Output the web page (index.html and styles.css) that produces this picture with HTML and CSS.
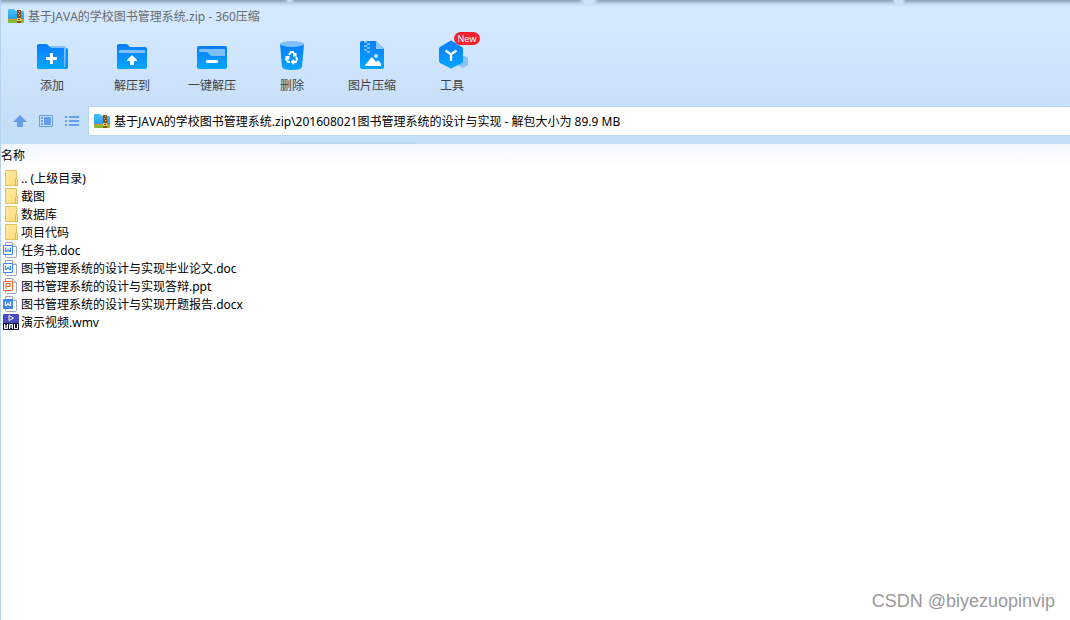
FILE: index.html
```html
<!DOCTYPE html>
<html lang="zh-CN">
<head>
<meta charset="utf-8">
<meta name="viewport" content="width=device-width, initial-scale=1">
<title>基于JAVA的学校图书管理系统.zip - 360压缩</title>
<link rel="stylesheet" href="styles.css">
</head>
<body>
<svg class="defs" aria-hidden="true">
  <defs>
    <linearGradient id="blue" x1="0" y1="0" x2="0" y2="1"><stop offset="0" stop-color="#087dff"/><stop offset="1" stop-color="#04a6ff"/></linearGradient>
    <linearGradient id="sky" x1="0" y1="0" x2="0" y2="1"><stop offset="0" stop-color="#4bc0f8"/><stop offset="1" stop-color="#239be6"/></linearGradient>
    <linearGradient id="gold" x1="0" y1="0" x2="1" y2="1"><stop offset="0" stop-color="#ffeaa6"/><stop offset="1" stop-color="#ffdc79"/></linearGradient>
    <symbol id="zip" viewBox="0 0 16 14">
      <path d="M0 1q0-1 1-1h5l2 2h7q1 0 1 1v8H0z" fill="url(#sky)"/>
      <path d="M0 10h16v1H0z" fill="#ff8a1f"/><path d="M0 11h16v2q0 1-1 1H1q-1 0-1-1z" fill="#7fbd3a"/>
      <path d="M9 1h4v13H9z" fill="#8b4a16"/><path d="M11 2h1v1h-1zM10 4h1v1h-1zM11 6h1v1h-1z" fill="#e9c27a"/>
      <path d="M9 9h4v3H9z" fill="#ffd04b"/><path d="M10 10h2v1h-2z" fill="#70401b"/>
    </symbol>
    <symbol id="folder" viewBox="0 0 16 18">
      <path d="M2.500 1.500h11v8l1 1v6h-12z" fill="url(#gold)" stroke="#e6c25d"/>
      <path d="M12.500 16.500v-6q0-1 1-1t1 1v6z" fill="#ffe28a" stroke="#dfb94e"/>
    </symbol>
    <symbol id="doc" viewBox="0 0 16 18">
      <path d="M2.500 1.500h7l4 4v10q0 1-1 1h-9q-1 0-1-1z" fill="#fff" stroke="#a3a8b0"/>
      <path d="M9.500 1.500v4h4" fill="#eef0f3" stroke="#a3a8b0"/>
      <rect y="4" width="10" height="10" rx="1" fill="#3d87f5"/><path d="M1 5h8v8H1z" fill="#fff"/>
      <path d="M2.500 6.500v4h1l1.500-2 1.500 2h1v-4" fill="none" stroke="#3d87f5" stroke-width="1.200"/>
    </symbol>
    <symbol id="docx" viewBox="0 0 16 18">
      <path d="M2.500 1.500h7l4 4v10q0 1-1 1h-9q-1 0-1-1z" fill="#fff" stroke="#a3a8b0"/>
      <path d="M9.500 1.500v4h4" fill="#eef0f3" stroke="#a3a8b0"/>
      <rect y="4" width="10" height="10" rx="1" fill="#3d87f5"/>
      <path d="M2.500 6.500v4h1l1.500-2 1.500 2h1v-4" fill="none" stroke="#fff" stroke-width="1.200"/>
    </symbol>
    <symbol id="ppt" viewBox="0 0 16 18">
      <path d="M2.500 1.500h7l4 4v10q0 1-1 1h-9q-1 0-1-1z" fill="#fff" stroke="#a3a8b0"/>
      <path d="M9.500 1.500v4h4" fill="#eef0f3" stroke="#a3a8b0"/>
      <rect y="4" width="10" height="10" rx="1" fill="#f26b35"/><path d="M1 5h8v8H1z" fill="#fff"/>
      <path d="M3 12V6.500h4v3H3" fill="none" stroke="#f26b35" stroke-width="1.200"/>
    </symbol>
    <symbol id="wmv" viewBox="0 0 16 18">
      <rect y="1" width="16" height="16" rx="1" fill="#4a4bc0"/><path d="M0 10h16v6q0 1-1 1H1q-1 0-1-1z" fill="#15163a"/>
      <path d="M6 2.500v5L10.500 5z" fill="none" stroke="#fff"/>
      <path d="M1.500 11v4.500h3V11M3 12v3M6.500 16v-4.500h3V16M8 12v3M11.500 11v4.500h3V11" fill="none" stroke="#fff"/>
    </symbol>
  </defs>
</svg>

<main class="window">
  <header class="chrome">
    <div class="titlebar">
      <svg class="zip-icon" aria-hidden="true"><use href="#zip"/></svg>
      <h1 class="title">基于JAVA的学校图书管理系统.zip - 360压缩</h1>
    </div>

    <nav class="toolbar" aria-label="工具栏">
      <button class="tool" type="button">
        <svg class="tool-icon" viewBox="0 0 36 36" aria-hidden="true">
          <path d="M3 8q0-2 2-2h8l3 3h15q1 0 1 1v20q0 1-1 1H4q-1 0-1-1z" fill="url(#blue)"/>
          <path d="M16 8h14q2 0 2 2v19h-2V11q0-1-1-1H17z" fill="#7fc1ff"/><path d="M32 10q2 0 2 2v17q0 2-3 2z" fill="#0790ff"/>
          <path d="M16 15h3v4h4v3h-4v4h-3v-4h-4v-3h4z" fill="#fff"/>
        </svg>
        <span>添加</span>
      </button>
      <button class="tool" type="button">
        <svg class="tool-icon" viewBox="0 0 36 36" aria-hidden="true">
          <path d="M3 8q0-2 2-2h8l3 3h15q2 0 2 2v18q0 2-2 2H4q-1 0-1-1z" fill="url(#blue)"/>
          <path d="M5 13q0-1 1-1h24q1 0 1 1v2H5z" fill="#7fc1ff"/>
          <path d="M18 17l5 5v1h-3v4h-4v-4h-3v-1z" fill="#fff"/>
        </svg>
        <span>解压到</span>
      </button>
      <button class="tool" type="button">
        <svg class="tool-icon" viewBox="0 0 36 36" aria-hidden="true">
          <rect x="3" y="8" width="30" height="23" rx="2" fill="url(#blue)"/>
          <path d="M5 12q0-1 1-1h24q1 0 1 1v6H18q-2 0-3-2t-3-2H5z" fill="#7fc1ff"/><rect x="12" y="22" width="12" height="3" rx="1" fill="#fff"/>
        </svg>
        <span>一键解压</span>
      </button>
      <button class="tool" type="button">
        <svg class="tool-icon" viewBox="0 0 36 36" aria-hidden="true">
          <path d="M6 6h24l-2 23q-1 3-10 3T8 29z" fill="url(#blue)"/><ellipse cx="18" cy="6" rx="12" ry="3" fill="#7fc1ff"/>
          <g fill="none" stroke="#fff" stroke-width="2"><path d="M15 17l2-3h2l2 3M21.500 15v2.500H19M22 19l1 2-1 3h-3M20 22l-2 2 2 2M16 24h-2l-2-3 1-2M11.500 19h3v2.500"/></g>
        </svg>
        <span>删除</span>
      </button>
      <button class="tool" type="button">
        <svg class="tool-icon" viewBox="0 0 36 36" aria-hidden="true">
          <path d="M6 5q0-2 2-2h14l8 8v18q0 2-2 2H8q-2 0-2-2z" fill="url(#blue)"/><path d="M22 3l8 8h-8z" fill="#8ac8ff"/>
          <path d="M10 3h3v2h-3zM13 5h3v2h-3zM10 7h3v2h-3zM13 9h3v2h-3zM10 11h3v2h-3zM13 13h3v2h-3z" fill="#74bfff"/><circle cx="22" cy="18" r="2" fill="#c9e8ff"/>
          <path d="M11 28q0-1 1-2l5-6q1-1 2 0l3 4 1-1q1-1 2 0l2 3v2z" fill="#fff"/>
        </svg>
        <span>图片压缩</span>
      </button>
      <button class="tool" type="button">
        <svg class="tool-icon" viewBox="0 0 36 36" aria-hidden="true">
          <path d="M28 17l6 3v7l-5 3-6-3z" fill="#84c2fb"/>
          <path d="M16 3q1-1 2 0l10 6q1 1 1 2v12q0 1-1 2l-10 5q-1 1-2 0L6 25q-1-1-1-2V11q0-1 1-2z" fill="url(#blue)"/>
          <path d="M11.500 12.500l5.500 4 5.500-4M17 16.500V23" fill="none" stroke="#fff" stroke-width="2.200"/>
        </svg>
        <span>工具</span><span class="badge">New</span>
      </button>
    </nav>

    <div class="locationbar">
      <div class="views">
        <button class="view" type="button" aria-label="向上"><svg viewBox="0 0 14 14"><path d="M7 1l7 7h-4v5H4V8H0z" fill="#669ee9"/></svg></button>
        <button class="view" type="button" aria-label="预览视图"><svg viewBox="0 0 14 14"><path d="M.5 1.500h13v11H.5z" fill="none" stroke="#669ee9"/><path d="M5 3h7v8H5zM2 3h2v2H2zM2 6h2v2H2zM2 9h2v2H2z" fill="#669ee9"/></svg></button>
        <button class="view" type="button" aria-label="列表视图"><svg viewBox="0 0 14 14"><path d="M0 2h2v2H0zM4 2h10v2H4zM0 6h2v2H0zM4 6h10v2H4zM0 10h2v2H0zM4 10h10v2H4z" fill="#669ee9"/></svg></button>
      </div>
      <label class="address">
        <svg class="zip-icon" aria-hidden="true"><use href="#zip"/></svg>
        <input class="path" type="text" aria-label="路径" value="基于JAVA的学校图书管理系统.zip\201608021图书管理系统的设计与实现 - 解包大小为 89.9 MB">
      </label>
    </div>
  </header>

  <table class="files">
    <thead><tr><th scope="col">名称</th></tr></thead>
    <tbody>
      <tr><td><div class="file"><svg class="file-icon"><use href="#folder"/></svg>.. (上级目录)</div></td></tr>
      <tr><td><div class="file"><svg class="file-icon"><use href="#folder"/></svg>截图</div></td></tr>
      <tr><td><div class="file"><svg class="file-icon"><use href="#folder"/></svg>数据库</div></td></tr>
      <tr><td><div class="file"><svg class="file-icon"><use href="#folder"/></svg>项目代码</div></td></tr>
      <tr><td><div class="file"><svg class="file-icon"><use href="#doc"/></svg>任务书.doc</div></td></tr>
      <tr><td><div class="file"><svg class="file-icon"><use href="#doc"/></svg>图书管理系统的设计与实现毕业论文.doc</div></td></tr>
      <tr><td><div class="file"><svg class="file-icon"><use href="#ppt"/></svg>图书管理系统的设计与实现答辩.ppt</div></td></tr>
      <tr><td><div class="file"><svg class="file-icon"><use href="#docx"/></svg>图书管理系统的设计与实现开题报告.docx</div></td></tr>
      <tr><td><div class="file"><svg class="file-icon"><use href="#wmv"/></svg>演示视频.wmv</div></td></tr>
    </tbody>
  </table>
  <p class="watermark">CSDN @biyezuopinvip</p>
</main>
</body>
</html>
```

FILE: styles.css
```css
* { box-sizing: border-box; }
body {
  margin: 0;
  font: 12px/18px "Noto Sans", "Noto Sans CJK SC", sans-serif;
  font-kerning: none;
  color: #000;
  background: #fff;
}
button, input { font: inherit; font-kerning: inherit; color: inherit; border: 0; padding: 0; background: none; }
.defs { position: absolute; width: 0; height: 0; }
.window {
  display: flex;
  flex-direction: column;
  min-height: 100vh;
  border-left: 1px solid #b4d3f3;
}
.chrome {
  background:
    radial-gradient(ellipse 5px 4px at 27% 0, #c6dcf4 40%, transparent),
    radial-gradient(ellipse 10px 6px at 55% 0, #d0e4fb 50%, transparent),
    radial-gradient(ellipse 7px 6px at 84% 0, #d0e4fb 50%, transparent),
    linear-gradient(#b9d6f4, #b9d6f4) 30% 100% / 135px 2px no-repeat,
    linear-gradient(#91a7bb 1px, #a9bed0 2px, #c5daed 4px, transparent 7px),
    linear-gradient(#d5eaff, #d2e7fe 30%, #c9e0f9 70%, #c2ddf8);
  padding-bottom: 8px;
}
.titlebar { display: flex; align-items: center; gap: 4px; height: 32px; padding-left: 7px; }
.title { margin: 0; padding-top: 2px; font-size: 12px; font-weight: 400; color: #666b70; }
.zip-icon { flex: none; width: 16px; height: 14px; }
.toolbar { display: flex; height: 74px; padding: 6px 0 0 11px; }
.tool {
  position: relative;
  display: flex;
  flex-direction: column;
  align-items: center;
  gap: 3px;
  width: 80px;
  color: #404346;
}
.tool-icon { width: 36px; height: 36px; }
.badge {
  position: absolute;
  top: -6px;
  left: 42px;
  width: 26px;
  border-radius: 7px;
  background: #f5222d;
  color: #fff;
  font-size: 9px;
  line-height: 13px;
}
.locationbar { display: flex; align-items: center; }
.views { display: flex; gap: 12px; padding: 0 9px 0 12px; }
.view { width: 14px; height: 14px; }
.view svg { display: block; width: 14px; height: 14px; }
.address {
  display: flex;
  flex: 1;
  align-items: center;
  gap: 4px;
  height: 30px;
  padding-left: 5px;
  background: #fff;
  border: 1px solid #b8d5f3;
  border-right: 0;
}
.path { flex: 1; height: 20px; }
.files { width: 100%; border-collapse: collapse; }
.files th {
  height: 25px;
  padding: 0 0 2px;
  font-weight: 400;
  text-align: left;
  background: linear-gradient(#f3f8ff, #fff);
}
.files td { padding: 0; }
.file { display: flex; align-items: flex-start; gap: 2px; padding-left: 2px; height: 18px; line-height: 20px; }
.file-icon { flex: none; width: 16px; height: 18px; }
.watermark {
  margin: auto 15px 6px auto;
  font: 18px/26px "Liberation Sans", sans-serif;
  color: #999;
}
```
